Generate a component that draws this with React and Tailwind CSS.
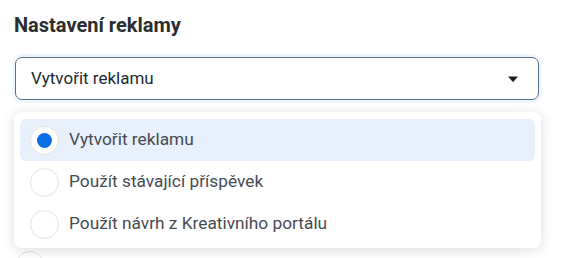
import React from "react";

const options = [
  { label: "Vytvořit reklamu", selected: true },
  { label: "Použít stávající příspěvek", selected: false },
  { label: "Použít návrh z Kreativního portálu", selected: false },
];

const Radio = ({ checked }) => (
  <span className="flex h-[29px] w-[29px] shrink-0 items-center justify-center rounded-full border border-[#e6e4e0] bg-white">
    {checked && <span className="h-[15px] w-[15px] rounded-full bg-[#0b6ee9]"></span>}
  </span>
);

const App = () => {
  return (
    <div className="relative h-[258px] w-[565px] overflow-hidden bg-white font-['Roboto',sans-serif]">
      <h2 className="pl-[14px] pt-[12px] text-[20px] font-bold leading-[26px] text-[#2b2d30]">
        Nastavení reklamy
      </h2>

      <div className="ml-[15px] mt-[19px] flex h-[43px] w-[524px] items-center justify-between rounded-[7px] border border-[#56718c] pl-[15px] pr-[20px] shadow-[0_0_0_3px_#eef5fc]">
        <span className="text-[17px] text-[#1c2b33]">Vytvořit reklamu</span>
        <svg width="10" height="6" viewBox="0 0 10 6">
          <path d="M0 0.5 H10 L5.6 5.4 Q5 6 4.4 5.4 Z" fill="#1c1e21" />
        </svg>
      </div>

      <div className="ml-[16px] mt-[151px] h-[28px] w-[28px] rounded-full border border-[#e4e4e4]"></div>

      <div className="absolute left-[14px] top-[112px] flex w-[527px] flex-col rounded-[8px] bg-white px-[6px] pb-[3px] pt-[7px] shadow-[0_2px_14px_rgba(0,0,0,0.14)]">
        {options.map((opt) => (
          <div
            key={opt.label}
            className={`flex h-[42px] items-center gap-[10px] rounded-[6px] pl-[10px] ${
              opt.selected ? "bg-[#e7f0fb]" : ""
            }`}
          >
            <Radio checked={opt.selected} />
            <span className="text-[17.3px] text-[#474b52]">{opt.label}</span>
          </div>
        ))}
      </div>
    </div>
  );
};

export default App;
